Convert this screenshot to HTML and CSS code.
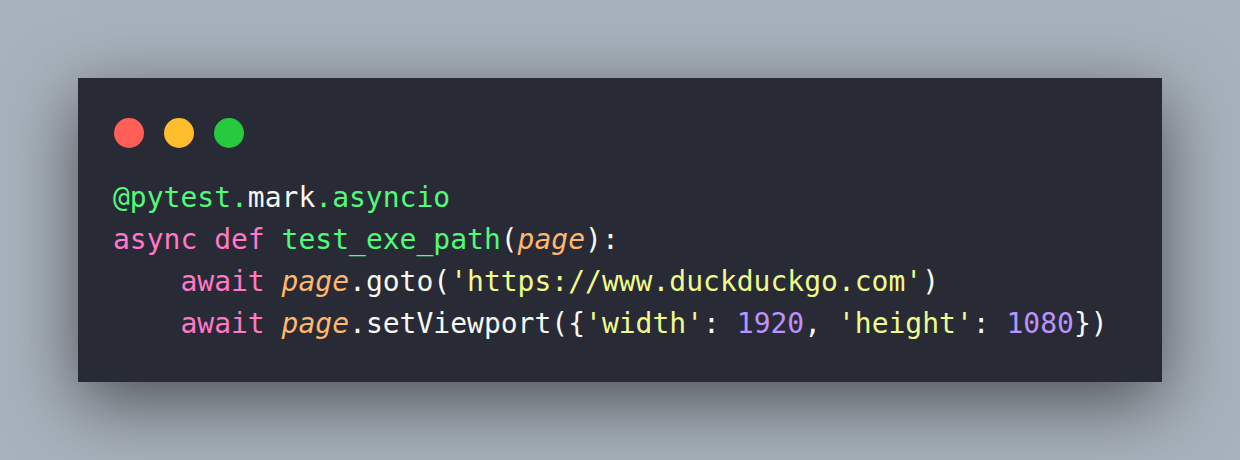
FILE: index.html
```html
<!DOCTYPE html>
<html lang="en">
<head>
  <meta charset="UTF-8" />
  <title>test_exe_path</title>
  <link rel="stylesheet" href="styles.css">
</head>
<body>

  <div class="window">
    <div class="controls">
      <span class="dot red"></span>
      <span class="dot yellow"></span>
      <span class="dot green"></span>
    </div>
    <pre class="code"><span class="fn">@pytest.</span>mark<span class="fn">.asyncio</span>
<span class="kw">async</span> <span class="kw">def</span> <span class="fn">test_exe_path</span>(<span class="arg">page</span>):
    <span class="kw">await</span> <span class="arg">page</span>.goto(<span class="str">'https://www.duckduckgo.com'</span>)
    <span class="kw">await</span> <span class="arg">page</span>.setViewport({<span class="str">'width'</span>: <span class="num">1920</span>, <span class="str">'height'</span>: <span class="num">1080</span>})</pre>
  </div>

</body>
</html>
```

FILE: styles.css
```css
body {
  margin: 0;
  padding: 78px;
  background: #a8b2bc;
}
.window {
  background: #282a36;
  padding: 40px 35px 37px 35px;
  box-shadow: 0 20px 68px rgba(0, 0, 0, 0.55);
}
.controls {
  display: flex;
  gap: 20px;
  padding-left: 1px;
}
.dot {
  width: 30px;
  height: 30px;
  border-radius: 50%;
}
.red { background: #ff5f56; }
.yellow { background: #ffbd2e; }
.green { background: #27c93f; }
.code {
  margin: 29px 0 0 0;
  font-family: "DejaVu Sans Mono", monospace;
  font-size: 28px;
  line-height: 42px;
  color: #f8f8f2;
}
.fn { color: #50fa7b; }
.kw { color: #ff79c6; }
.arg { color: #ffb86c; font-style: italic; }
.str { color: #f1fa8c; }
.num { color: #bd93f9; }
```
